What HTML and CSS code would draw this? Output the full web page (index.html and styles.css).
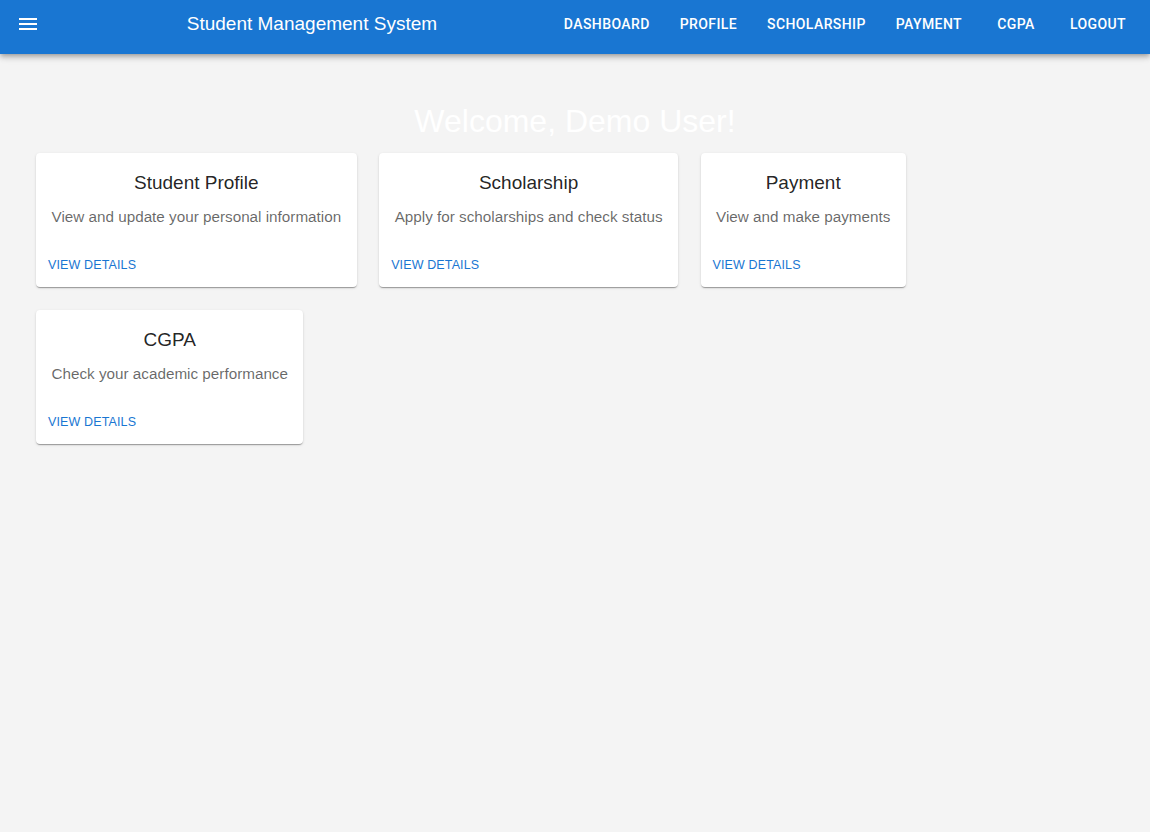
FILE: index.html
```html
<!DOCTYPE html>
<html lang="en">
<head>
<meta charset="utf-8">
<title>Student Management System</title>
<link rel="stylesheet" href="styles.css">
</head>
<body>
<header class="appbar">
  <button class="menu-btn" aria-label="menu">
    <svg viewBox="0 0 24 24" width="24" height="24"><path fill="#fff" d="M3 18h18v-2H3v2zm0-5h18v-2H3v2zm0-7v2h18V6H3z"/></svg>
  </button>
  <div class="brand">Student Management System</div>
  <nav class="nav">
    <a class="nav-btn">Dashboard</a>
    <a class="nav-btn">Profile</a>
    <a class="nav-btn">Scholarship</a>
    <a class="nav-btn">Payment</a>
    <a class="nav-btn">CGPA</a>
    <a class="nav-btn">Logout</a>
  </nav>
</header>
<main class="main">
  <h1 class="welcome">Welcome, Demo User!</h1>
  <div class="cards">
    <div class="card">
      <div class="card-content">
        <h2 class="card-title">Student Profile</h2>
        <p class="card-desc">View and update your personal information</p>
      </div>
      <div class="card-actions"><a class="card-link">View Details</a></div>
    </div>
    <div class="card">
      <div class="card-content">
        <h2 class="card-title">Scholarship</h2>
        <p class="card-desc">Apply for scholarships and check status</p>
      </div>
      <div class="card-actions"><a class="card-link">View Details</a></div>
    </div>
    <div class="card">
      <div class="card-content">
        <h2 class="card-title">Payment</h2>
        <p class="card-desc">View and make payments</p>
      </div>
      <div class="card-actions"><a class="card-link">View Details</a></div>
    </div>
    <div class="card">
      <div class="card-content">
        <h2 class="card-title">CGPA</h2>
        <p class="card-desc">Check your academic performance</p>
      </div>
      <div class="card-actions"><a class="card-link">View Details</a></div>
    </div>
  </div>
</main>
</body>
</html>
```

FILE: styles.css
```css
* { box-sizing: border-box; }
html, body { margin: 0; padding: 0; }
body {
  background: #f4f4f4;
  font-family: "Liberation Sans", Arial, sans-serif;
  min-height: 832px;
}
.appbar {
  height: 54px;
  background: #1976d2;
  color: #fff;
  display: flex;
  align-items: center;
  padding: 0 16px 6px 4px;
  box-shadow: 0 2px 4px -1px rgba(0,0,0,0.2), 0 4px 5px 0 rgba(0,0,0,0.14), 0 1px 10px 0 rgba(0,0,0,0.12);
  position: relative;
  z-index: 2;
}
.menu-btn {
  width: 48px;
  height: 48px;
  padding: 12px;
  border: 0;
  background: transparent;
  display: flex;
  align-items: center;
  justify-content: center;
  margin-right: 16px;
}
.menu-btn svg { display: block; }
.brand {
  flex: 1;
  text-align: center;
  font-size: 19px;
  line-height: 30px;
}
.nav {
  display: flex;
  gap: 14px;
}
.nav-btn {
  font-family: Roboto, "Liberation Sans", sans-serif;
  font-weight: 500;
  font-size: 14px;
  line-height: 24.5px;
  letter-spacing: 0.02857em;
  text-transform: uppercase;
  padding: 6px 8px;
  min-width: 64px;
  text-align: center;
  color: #fff;
}
.main {
  padding: 49px 36px 0;
}
.welcome {
  margin: 0 0 14px;
  font-size: 32px;
  line-height: 36px;
  font-weight: 400;
  color: #fff;
  text-align: center;
}
.cards {
  display: flex;
  flex-wrap: wrap;
  gap: 23px 22.5px;
  max-width: 900px;
  align-items: flex-start;
}
.card {
  background: #fff;
  border-radius: 4px;
  box-shadow: 0 2px 1px -1px rgba(0,0,0,0.2), 0 1px 1px 0 rgba(0,0,0,0.14), 0 1px 3px 0 rgba(0,0,0,0.12);
}
.card-content {
  padding: 17px 15.5px 11px;
  text-align: center;
}
.card-title {
  margin: 0 0 9px;
  font-size: 19px;
  line-height: 26px;
  font-weight: 400;
  color: rgba(0,0,0,0.87);
}
.card-desc {
  margin: 0;
  font-size: 15.25px;
  line-height: 24px;
  color: rgba(0,0,0,0.6);
  white-space: nowrap;
}
.card-actions {
  padding: 10px 8px 6px;
  display: flex;
}
.card-link {
  font-size: 12.5px;
  line-height: 22.75px;
  padding: 4px 4px;
  color: #1976d2;
  text-transform: uppercase;
  letter-spacing: 0.01em;
}
```
